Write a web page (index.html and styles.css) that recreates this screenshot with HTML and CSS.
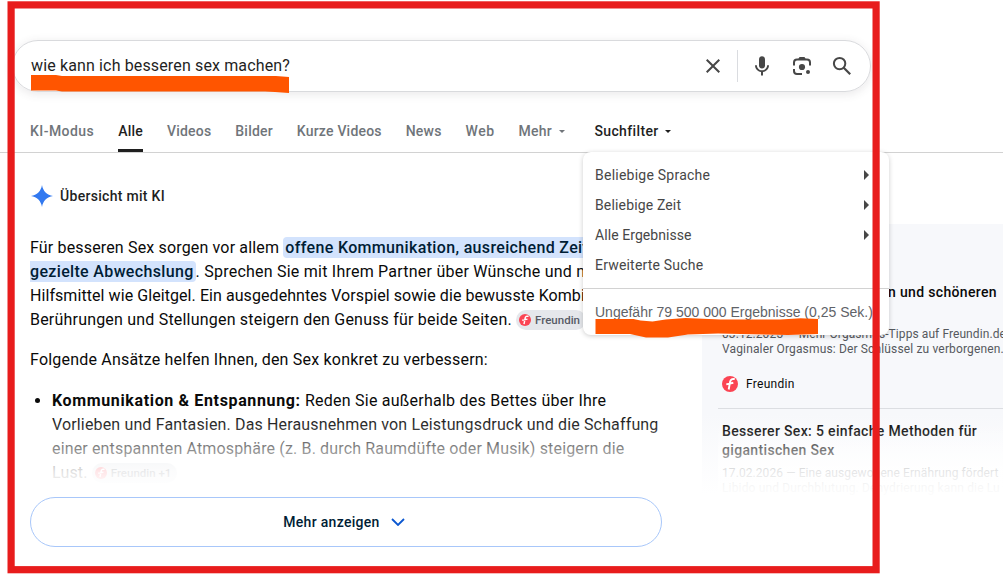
FILE: index.html
```
<!DOCTYPE html>
<html lang="de">
	<head>
		<meta charset="UTF-8">
		<meta name="viewport" content="width=device-width, initial-scale=1.0">
		<title>wie kann ich besseren sex machen? - Suche</title>
		<link rel="stylesheet" href="styles.css">
	</head>
	<body>
		<svg class="defs" width="0" height="0">
			<symbol id="freundin" viewBox="0 0 16 16">
				<circle cx="8" cy="8" r="8" fill="#fb4453"/>
				<path d="M12.800 3.200c-2.600-.7-4.200.2-4.700 2.500L6.700 13.500M4.300 8.400l7-1.600" fill="none" stroke="#fff" stroke-width="1.9"/>
			</symbol>
		</svg>

		<header class="header">
			<div class="search">
				<span class="query">wie kann ich besseren sex machen?</span>
				<div class="tools">
					<svg class="icon" viewBox="0 0 24 24"><path d="M19 6.410 17.590 5 12 10.590 6.410 5 5 6.410 10.590 12 5 17.590 6.410 19 12 13.410 17.590 19 19 17.590 13.410 12z"/></svg>
					<i class="sep"></i>
					<svg class="icon" viewBox="0 0 24 24"><path d="M12 14.500c1.700 0 3-1.300 3-3V5.300c0-1.700-1.300-3-3-3s-3 1.300-3 3v6.200c0 1.700 1.300 3 3 3z"/><path d="M5 11.300h1.900c0 2.900 2.200 5 5.100 5s5.100-2.100 5.100-5H19c0 3.500-2.600 6.300-6 6.800V21.500h-2v-3.400c-3.400-.5-6-3.300-6-6.800z"/></svg>
					<svg class="icon" viewBox="0 0 24 24"><path d="M4 11.500V8.500c0-1.700 1.300-3 3-3h10c1.700 0 3 1.300 3 3v3M4 15V17c0 1.700 1.300 3 3 3h5" fill="none" stroke="#474747" stroke-width="2"/><path d="M9.500 3h5l1.500 2.500H8z"/><circle cx="12" cy="13" r="3.100"/><circle cx="18" cy="18" r="2"/></svg>
					<svg class="icon" viewBox="0 0 24 24"><circle cx="9.600" cy="9.600" r="5.700" fill="none" stroke="#474747" stroke-width="2"/><path d="m13.500 13.500 6.700 6.700" fill="none" stroke="#474747" stroke-width="2.200"/></svg>
				</div>
			</div>
			<nav class="tabs">
				<a class="t-ki">KI-Modus</a>
				<a class="t-alle active">Alle</a>
				<a class="t-videos">Videos</a>
				<a class="t-bilder">Bilder</a>
				<a class="t-kurz">Kurze Videos</a>
				<a class="t-news">News</a>
				<a class="t-web">Web</a>
				<a class="t-mehr">Mehr <i class="caret"></i></a>
				<a class="t-filter">Suchfilter <i class="caret"></i></a>
			</nav>
		</header>

		<main class="main">
			<section class="overview">
				<h2 class="ai-title">
					<svg class="spark" viewBox="0 0 22 22"><path d="M11 0C11.900 6 16 10.100 22 11 16 11.900 11.900 16 11 22 10.100 16 6 11.900 0 11 6 10.100 10.100 6 11 0z"/></svg>
					<span>Übersicht mit KI</span>
				</h2>
				<div class="text">
					<p>
						<span class="line l1">Für besseren Sex sorgen vor allem <mark>offene Kommunikation, ausreichend Zeit</mark></span>
						<span class="line l2"><mark class="end">gezielte Abwechslung</mark>. Sprechen Sie mit Ihrem Partner über Wünsche und n</span>
						<span class="line l3">Hilfsmittel wie Gleitgel. Ein ausgedehntes Vorspiel sowie die bewusste Kombi</span>
						<span class="line l4">Berührungen und Stellungen steigern den Genuss für beide Seiten. <span class="chip"><svg><use href="#freundin"/></svg>Freundin</span></span>
					</p>
					<p><span class="line l5">Folgende Ansätze helfen Ihnen, den Sex konkret zu verbessern:</span></p>
					<ul>
						<li>
							<span class="line l6"><b>Kommunikation &amp; Entspannung:</b> Reden Sie außerhalb des Bettes über Ihre</span>
							<span class="line l7">Vorlieben und Fantasien. Das Herausnehmen von Leistungsdruck und die Schaffung</span>
							<span class="line l8">einer entspannten Atmosphäre (z. B. durch Raumdüfte oder Musik) steigern die</span>
							<span class="line l9">Lust. <span class="chip"><svg><use href="#freundin"/></svg>Freundin +1</span></span>
						</li>
					</ul>
				</div>
				<button class="more">Mehr anzeigen <svg viewBox="0 0 14 8"><path d="m1 1 6 6 6-6"/></svg></button>
			</section>

			<aside class="sources">
				<article class="card first">
					<h3>n und schöneren</h3>
					<p><span class="line s1">03.12.2025 — Mehr Orgasmus-Tipps auf Freundin.de</span><span class="line s2">Vaginaler Orgasmus: Der Schlüssel zu verborgenen...</span></p>
					<div class="site"><svg><use href="#freundin"/></svg>Freundin</div>
				</article>
				<article class="card second">
					<h3><span class="line">Besserer Sex: 5 einfache Methoden für</span><span class="line">gigantischen Sex</span></h3>
					<p><span class="line s1">17.02.2026 — Eine ausgewogene Ernährung fördert</span><span class="line s2">Libido und Durchblutung. Dehydrierung kann die Lu</span></p>
				</article>
			</aside>
		</main>

		<!-- Suchfilter menu -->
		<div class="menu">
			<ul>
				<li class="m1 sub">Beliebige Sprache</li>
				<li class="m2 sub">Beliebige Zeit</li>
				<li class="m3 sub">Alle Ergebnisse</li>
				<li class="m4">Erweiterte Suche</li>
			</ul>
			<div class="stats">Ungefähr 79 500 000 Ergebnisse (0,25 Sek.)</div>
		</div>

		<!-- marker strokes and frame -->
		<svg class="marks" width="1003" height="574">
			<path d="M31 75h25l6 1h214l13 1v16l-14-1-10-.6H62l-6-.9H31z"/>
			<path d="M595.500 319h38l7 1.500 12 1 13-2 20-1.500 35 1.500h60l20-1.200 17.500.7v15l-30 1-70-1.500-30 1-20 3h-22l-16-3.500h-34.500z"/>
			<rect class="frame" x="11.100" y="4.900" width="865" height="564.800"/>
		</svg>
	</body>
</html>
```
FILE: styles.css
```
* {
	box-sizing: border-box;
	margin: 0;
	padding: 0;
}

body {
	position: relative;
	width: 1003px;
	height: 574px;
	overflow: hidden;
	background: #fff;
	color: #0a0a0a;
	font-family: Roboto, "Liberation Sans", sans-serif;
}

.defs {
	position: absolute;
}

i {
	font-style: normal;
}

/* header */
.header {
	height: 153px;
	padding-top: 40px;
	border-bottom: 1px solid #d2d2d2;
}

.search {
	display: flex;
	justify-content: space-between;
	width: 859px;
	height: 52px;
	margin-left: 12px;
	padding: 0 16px 0 18px;
	border: 1px solid #d9dadd;
	border-radius: 26px;
	box-shadow: 0 2px 8px 1px rgba(64, 60, 67, 0.1);
	align-items: center;
}

.query {
	padding-bottom: 2px;
	font-size: 16px;
	color: #1f1f1f;
	letter-spacing: 0.14px;
}

.tools {
	display: flex;
	align-items: center;
}

.icon {
	width: 24px;
	height: 24px;
	margin-left: 16px;
	fill: #474747;
}

.sep {
	width: 1px;
	height: 32px;
	margin: 0 -4px 0 12px;
	background: #dadce0;
}

.tabs {
	display: flex;
	height: 60px;
	padding-left: 30px;
	font-size: 14px;
	font-weight: 500;
	color: #70757a;
	line-height: 20px;
	letter-spacing: 0.2px;
	white-space: nowrap;
}

.tabs a {
	height: 60px;
	padding-top: 29px;
	margin-right: 24px;
}

.tabs .t-ki {
	letter-spacing: 0.45px;
}

.tabs .t-web {
	letter-spacing: 0.5px;
}

.tabs .active {
	color: #1f1f1f;
	border-bottom: 3px solid #1f1f1f;
}

.tabs .t-filter {
	color: #1f1f1f;
	margin-left: 6px;
	letter-spacing: 0.35px;
}

.caret {
	display: inline-block;
	margin: 0 0 3px 3px;
	border: 3.5px solid transparent;
	border-top-color: currentColor;
	border-bottom: 0;
}

/* overview */
.main {
	display: flex;
	gap: 40px;
	padding-left: 30px;
}

.overview {
	width: 632px;
	padding-top: 32px;
}

.ai-title {
	display: flex;
	height: 22px;
	padding-left: 1px;
	gap: 7px;
	align-items: center;
	font-size: 14px;
	font-weight: 500;
	color: #1f1f1f;
	letter-spacing: 0.3px;
}

.spark {
	width: 22px;
	height: 22px;
	fill: #3279f0;
}

.text {
	position: relative;
	height: 261px;
	margin-top: 29px;
	font-size: 16px;
	line-height: 24px;
}

.text:after {
	content: "";
	position: absolute;
	left: 0;
	right: 0;
	bottom: 0;
	height: 88px;
	background: linear-gradient(rgba(255, 255, 255, 0), rgba(255, 255, 255, 0.12) 17%, rgba(255, 255, 255, 0.5) 44%, rgba(255, 255, 255, 0.87) 71%, #fff 92%);
}

.text p {
	margin-bottom: 16px;
}

.line {
	display: block;
	white-space: nowrap;
}

.l1 {
	letter-spacing: 0.16px;
}

.l2 {
	letter-spacing: 0.23px;
}

.l3 {
	letter-spacing: 0.07px;
}

.l4,
.l5 {
	letter-spacing: 0.2px;
}

.l6 {
	letter-spacing: 0.24px;
}

.l6 b {
	letter-spacing: 0.64px;
}

.l7,
.l8,
.l9 {
	letter-spacing: 0.15px;
}

mark {
	padding: 1px 2px;
	border-radius: 4px 0 0 4px;
	background: #d3e3fd;
	color: #001d35;
	font-weight: 500;
	letter-spacing: 0.34px;
}

mark.end {
	padding-left: 0;
	border-radius: 0 4px 4px 0;
	letter-spacing: 0.34px;
}

.text ul {
	padding-left: 22px;
	margin-top: 17px;
}

.chip {
	display: inline-flex;
	height: 20px;
	gap: 4px;
	padding: 0 6px 0 3px;
	border-radius: 10px;
	background: #e5e7eb;
	align-items: center;
	vertical-align: -1px;
	font-size: 11.5px;
	font-weight: 500;
	line-height: 20px;
	color: #575b66;
	letter-spacing: 0;
}

.chip svg {
	width: 12px;
	height: 12px;
}

.more {
	display: flex;
	width: 632px;
	height: 50px;
	padding-right: 4px;
	border: 1px solid #a8c7fa;
	border-radius: 25px;
	background: #fff;
	gap: 11px;
	justify-content: center;
	align-items: center;
	font: 500 14px Roboto, sans-serif;
	color: #001d35;
	letter-spacing: 0.3px;
}

.more svg {
	width: 14px;
	height: 8px;
	fill: none;
	stroke: #0b57d0;
	stroke-width: 1.8;
}

/* sources */
.sources {
	width: 301px;
	height: 276px;
	margin-top: 71px;
	background: linear-gradient(#f7f8fb 190px, #fff 270px);
	overflow: hidden;
}

.card {
	margin-left: 16px;
	padding-left: 4px;
}

.card h3 {
	font-size: 14px;
	font-weight: 500;
	line-height: 19px;
	letter-spacing: 0.34px;
}

.card p {
	font-size: 12px;
	line-height: 15px;
	color: #56595e;
}

.s1 {
	letter-spacing: 0.08px;
}

.s2 {
	letter-spacing: 0.15px;
}

.first {
	height: 185px;
	padding-top: 59px;
	border-bottom: 1px solid #dcdee2;
}

.first h3 {
	padding-left: 166px;
	white-space: nowrap;
}

.first p {
	margin-top: 25px;
}

.site {
	display: flex;
	margin-top: 19px;
	gap: 8px;
	align-items: center;
	font-size: 12px;
	line-height: 16px;
	letter-spacing: 0.3px;
}

.site svg {
	width: 16px;
	height: 16px;
}

.second {
	position: relative;
	height: 91px;
	padding-top: 13px;
}

.second p {
	margin-top: 6px;
}

.second:after {
	content: "";
	position: absolute;
	left: 0;
	right: 0;
	top: 0;
	bottom: 0;
	background: linear-gradient(rgba(255, 255, 255, 0) 5%, rgba(255, 255, 255, 0.1) 24%, rgba(255, 255, 255, 0.45) 45%, rgba(255, 255, 255, 0.84) 68%, rgba(255, 255, 255, 0.95) 85%, #fff 100%);
}

/* filter menu */
.menu {
	position: absolute;
	left: 583px;
	top: 152px;
	width: 306px;
	height: 183px;
	border-radius: 8px;
	background: #fff;
	box-shadow: 0 1px 5px rgba(0, 0, 0, 0.2);
	font-size: 14px;
	color: #474747;
}

.menu ul {
	height: 137px;
	padding-top: 8px;
	border-bottom: 1px solid #d2d2d2;
	list-style: none;
}

.menu li {
	display: flex;
	height: 30px;
	padding: 0 20px 0 12px;
	justify-content: space-between;
	align-items: center;
}

.m1 {
	letter-spacing: 0.24px;
}

.m2 {
	letter-spacing: 0.15px;
}

.m3 {
	letter-spacing: 0.07px;
}

.m4 {
	letter-spacing: 0.19px;
}

.sub:after {
	content: "";
	border: 5px solid transparent;
	border-left-color: #474747;
	border-right: 0;
}

.stats {
	padding: 14px 0 0 12px;
	font-family: "Liberation Sans", sans-serif;
	line-height: 18px;
	color: #5f6368;
	white-space: nowrap;
}

.marks {
	position: absolute;
	left: 0;
	top: 0;
	fill: #ff5500;
}

.frame {
	fill: none;
	stroke: #e81c1c;
	stroke-width: 7.2;
}
```
